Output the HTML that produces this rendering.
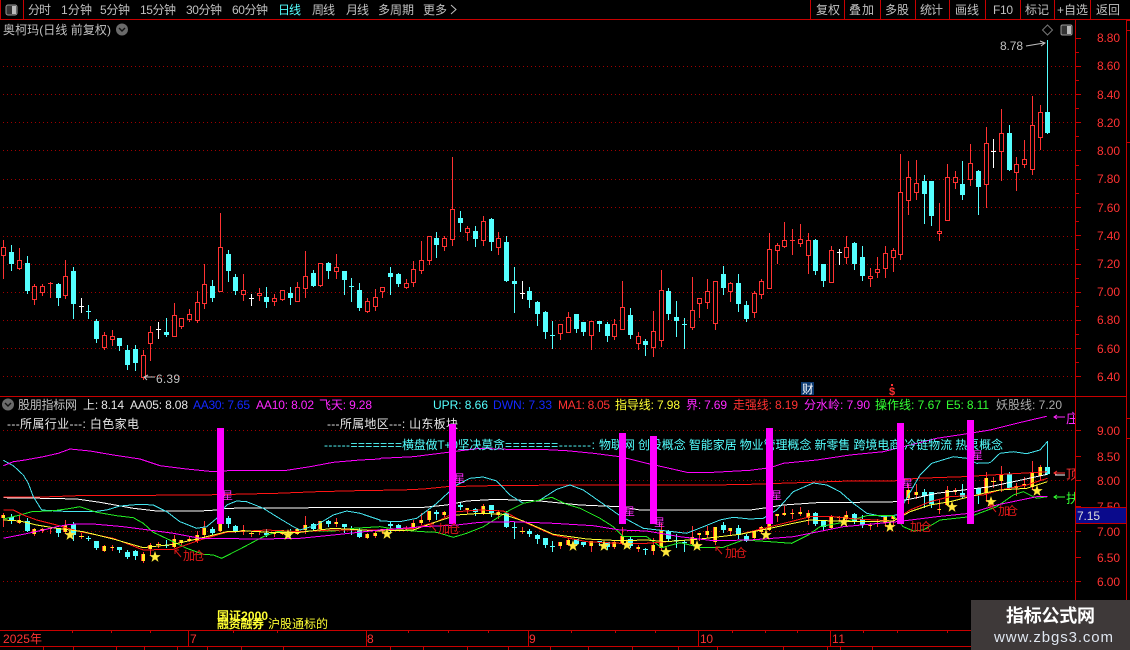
<!DOCTYPE html>
<html lang="zh"><head><meta charset="utf-8"><title>K线</title>
<style>
html,body{margin:0;padding:0;background:#000;width:1130px;height:650px;overflow:hidden}
svg{display:block;position:absolute;left:0;top:0}
text{font-family:"Liberation Sans","Noto Sans CJK SC",sans-serif;font-size:12px;white-space:pre}
.g{fill:#c0c0c0}.r{fill:#ff3232}.c{fill:#54ffff}.w{fill:#e6e6e6}.b{fill:#1428ff}.m{fill:#ff28ff}.y{fill:#ffff33}.n{fill:#33ff33}
</style></head><body>
<svg id="s" width="1130" height="650" viewBox="0 0 1130 650" xmlns="http://www.w3.org/2000/svg">
<defs><clipPath id="cl"><rect x="1040" y="398" width="35" height="200"/></clipPath></defs>
<g id="grid" shape-rendering="crispEdges"></g>
<g id="up" shape-rendering="crispEdges"></g>
<g id="lo" shape-rendering="crispEdges"></g>
<g id="ln" fill="none" stroke-linejoin="round" shape-rendering="crispEdges"></g>

<!-- toolbar -->
<g class="g">
<text x="28" y="14" textLength="23">分时</text><text x="61" y="14" textLength="31">1分钟</text><text x="100" y="14" textLength="30">5分钟</text><text x="140" y="14" textLength="36">15分钟</text><text x="186" y="14" textLength="36">30分钟</text><text x="232" y="14" textLength="36">60分钟</text>
<text x="278" y="14" textLength="23" class="c">日线</text><text x="312" y="14" textLength="23">周线</text><text x="346" y="14" textLength="23">月线</text><text x="378" y="14" textLength="36">多周期</text><text x="423" y="14" textLength="24">更多</text>
<text x="816" y="14" textLength="24">复权</text><text x="849" y="14" textLength="25">叠加</text><text x="885" y="14" textLength="24">多股</text><text x="920" y="14" textLength="23">统计</text><text x="955" y="14" textLength="24">画线</text><text x="993" y="14" textLength="20">F10</text><text x="1025" y="14" textLength="24">标记</text><text x="1057" y="14" textLength="31">+自选</text><text x="1096" y="14" textLength="24">返回</text>
<text x="3" y="34" textLength="108">奥柯玛(日线 前复权)</text>
</g>
<path d="M451 5l5 4.5-5 4.5" fill="none" stroke="#c0c0c0"/>
<rect x="6" y="5" width="11" height="10" rx="2" fill="#333" stroke="#999"/><rect x="12" y="6" width="4" height="8" fill="#bbb"/>
<circle cx="122" cy="29.5" r="6" fill="#6a6a6a"/><path d="M119 28l3 3 3-3" fill="none" stroke="#111" stroke-width="1.4"/>
<path d="M1047.5 25l5 5-5 5-5-5z" fill="none" stroke="#777"/>
<rect x="1061" y="25" width="11" height="10" rx="1.5" fill="#333" stroke="#999"/><rect x="1067" y="26" width="4" height="8" fill="#bbb"/>

<text x="1000" y="50" class="g" textLength="23">8.78</text>
<path d="M1026 46l18-3M1040 41l5 2-4 3" fill="none" stroke="#c0c0c0"/>
<text x="156" y="383" class="g" textLength="24">6.39</text>
<path d="M144 377h11M148 375l-4 2 3 3" fill="none" stroke="#c0c0c0"/>
<rect x="801" y="382" width="13" height="13" fill="#0d3a70"/><text x="802" y="393" style="font-size:11.5px" fill="#fff">财</text>
<text x="889" y="395" style="font-size:11px;font-weight:bold" class="r">$</text><rect x="891" y="384" width="2" height="2" fill="#ff3232"/>

<!-- legend -->
<circle cx="8" cy="404.5" r="6" fill="#6a6a6a"/><path d="M5 403l3 3 3-3" fill="none" stroke="#111" stroke-width="1.4"/>
<text x="18" y="409" class="g" textLength="59">股朋指标网</text>
<text x="83" y="409" class="w" textLength="41">上: 8.14</text><text x="130" y="409" class="w" textLength="58">AA05: 8.08</text>
<text x="193" y="409" class="b" textLength="57">AA30: 7.65</text><text x="256" y="409" class="m" textLength="58">AA10: 8.02</text><text x="319" y="409" class="m" textLength="53">飞天: 9.28</text>
<text x="433" y="409" class="c" textLength="55">UPR: 8.66</text><text x="493" y="409" class="b" textLength="59">DWN: 7.33</text><text x="558" y="409" class="r" textLength="52">MA1: 8.05</text>
<text x="615" y="409" class="y" textLength="65">指导线: 7.98</text><text x="686" y="409" class="m" textLength="41">界: 7.69</text><text x="733" y="409" class="r" textLength="65">走强线: 8.19</text>
<text x="804" y="409" class="m" textLength="66">分水岭: 7.90</text><text x="875" y="409" class="n" textLength="66">操作线: 7.67</text><text x="946" y="409" class="n" textLength="43">E5: 8.11</text><text x="996" y="409" fill="#aaa" textLength="66">妖股线: 7.20</text>

<text x="7" y="428" class="w" textLength="132">---所属行业---: 白色家电</text>
<text x="327" y="428" class="w" textLength="131">---所属地区---: 山东板块</text>
<g class="c">
<text x="324" y="449" textLength="78">------=======</text><text x="402" y="449" textLength="103">横盘做T+0坚决莫贪</text><text x="505" y="449" textLength="90">=======-------:</text>
<text x="599" y="449" textLength="404">物联网 创投概念 智能家居 物业管理概念 新零售 跨境电商 冷链物流 热泵概念</text>
</g>

<!-- bars & labels drawn by script into #ov -->
<g id="ov"></g>

<g fill="#e01818">
<text x="183" y="560" textLength="22">加仓</text><text x="438" y="533" textLength="22">加仓</text><text x="725" y="557" textLength="22">加仓</text><text x="998" y="515" textLength="20">加仓</text><text x="910" y="531" textLength="22">加仓</text>
</g>
<path d="M181 557l-6-7M175 554v-4h4M436 531l-6-7M430 528v-4h4M722 554l-6-7M716 551v-4h4M996 512l-6-7M990 509v-4h4" fill="none" stroke="#e01818"/>

<g class="y" style="font-weight:bold">
<text x="217" y="620" textLength="51">国证2000</text><text x="217" y="628" textLength="47">融资融券</text></g>
<text x="268" y="628" class="y" textLength="60">沪股通标的</text>

<!-- right arrows clipped by axis -->
<g clip-path="url(#cl)">
<path d="M1054 417h11M1057 415l-3 2 3 2" stroke="#ff28ff" fill="none"/><text x="1066" y="423" class="m" style="font-size:13px">庄</text>
<path d="M1054 473h11M1057 471l-3 2 3 2" stroke="#ff3232" fill="none"/><path d="M1055 475h10" stroke="#fff"/><text x="1066" y="479" class="r" style="font-size:13px">顶</text>
<path d="M1054 497h11M1057 495l-3 2 3 2" stroke="#33ff33" fill="none"/><text x="1066" y="503" class="n" style="font-size:13px">扶</text>
</g>

<!-- axis labels -->
<g class="r">
<text x="1097" y="42" textLength="23">8.80</text><text x="1097" y="70" textLength="23">8.60</text><text x="1097" y="99" textLength="23">8.40</text><text x="1097" y="127" textLength="23">8.20</text><text x="1097" y="155" textLength="23">8.00</text><text x="1097" y="183" textLength="23">7.80</text><text x="1097" y="212" textLength="23">7.60</text><text x="1097" y="240" textLength="23">7.40</text><text x="1097" y="268" textLength="23">7.20</text><text x="1097" y="296" textLength="23">7.00</text><text x="1097" y="324" textLength="23">6.80</text><text x="1097" y="353" textLength="23">6.60</text><text x="1097" y="381" textLength="23">6.40</text>
<text x="1097" y="435" textLength="23">9.00</text><text x="1097" y="461" textLength="23">8.50</text><text x="1097" y="485" textLength="23">8.00</text><text x="1097" y="511" textLength="23">7.50</text><text x="1097" y="536" textLength="23">7.00</text><text x="1097" y="562" textLength="23">6.50</text><text x="1097" y="586" textLength="23">6.00</text>
<text x="3" y="643" textLength="39">2025年</text><text x="190" y="643">7</text><text x="367" y="643">8</text><text x="529" y="643">9</text><text x="700" y="643" textLength="13">10</text><text x="832" y="643" textLength="13">11</text>
</g>
<rect x="1076" y="507" width="50" height="17" fill="#0a0a8c" shape-rendering="crispEdges"/>
<path d="M1076 507.5h50M1076 523.5h50" stroke="#c00000" shape-rendering="crispEdges"/>
<text x="1077" y="520" fill="#dcdcdc" textLength="23">7.15</text>

<!-- watermark -->
<rect x="971" y="600" width="159" height="50" fill="#3e3939"/>
<text x="1006" y="622" fill="#fff" style="font-size:18px;font-weight:bold" textLength="89">指标公式网</text>
<text x="994" y="642" fill="#dfe6f0" style="font-size:15px" textLength="119">www.zbgs3.com</text>
</svg>
<script>
var D=[
[0,230,"r10,30,52,74,143;c34,45,66,101,120;r58,55,91,113,117;c82,78,99,183,188;r103,162,169,206,221;r127,162,169,185,194;r151,155,159,163,201;c175,158,162,204,224;r196,90,139,194,203;c220,111,123,221,263;w243,204,227,228,246;c265,225,244,245,263;c289,267,273,327,336;r313,306,316,350,357;r337,300,319,326,345;c358,324,324,347,359;c382,346,360,404,416;c406,345,357,399,419;r430,360,376,440,446;r451,288,307,338,389;w474,277,296,297,323;c499,264,306,315,318;r523,219,256,317,317;r544,265,265,287,293;r568,237,253,266,272;r592,184,217,269,275;r613,102,163,218,234;c637,150,168,204,212;r661,-51,52,182,183;c685,60,72,123,153;c706,132,141,183,191;r730,132,181,191,209;w753,192,205,206,224;r778,174,190,194,209;c799,171,201,216,231;r823,193,203,212,224;r847,181,181,207,209;c871,171,190,204,221;r892,156,172,212,212;r916,64,139,173,201;c940,120,129,167,167;r961,100,100,164,167;c985,97,100,123,144;r1009,72,112,124,144;c1033,123,123,150,192;c1054,144,169,170,213;c1078,159,180,234,240;r1102,205,214,243,245;r1126,177,202,228,240"],
[380,170,"r7,352,352,364,381;c31,291,309,321,372;c55,309,312,342,348;r79,327,340,350,354;r100,273,298,335,348;r124,213,271,299,309;r148,199,199,269,282;c169,186,204,225,261;r193,199,205,227,240;r217,-39,118,206,225;c241,123,144,159,183;r262,168,175,185,210;c286,168,183,207,228;r310,138,154,209,225;c334,145,147,216,240;r355,186,205,230,252;c379,198,216,333,333;c403,291,333,342,426;w427,333,369,371,384;c448,351,363,390,411;c472,393,396,432,465;c496,423,426,486,504;c517,453,495,497,534;r541,463,463,488,507;r565,426,442,485,485;c589,432,432,477,486;c610,456,456,486,495;r634,453,454,494,537;c658,453,453,462,483;c682,456,462,498,513;r703,447,463,497,507;r727,333,412,476,476;c751,414,435,495,504;r775,486,499,518,537;c796,507,513,525,555;r820,423,484,530,558;r844,300,361,509,528;c865,354,363,432,447;c889,393,441,453,498;c913,444,462,464,534;r937,321,421,470,477;r958,385,385,398,441;r982,327,364,395,414;r1006,334,334,458,477;c1030,288,312,354,372;r1051,336,340,362,393;c1075,312,339,402,423;c1099,393,405,447,453"],
[750,90,"r13,603,609,665,681;r34,567,574,611,624;r58,429,478,593,593;r82,459,466,479,520;r103,396,451,467,470;r127,417,449,452,491;r151,402,448,458,467;r175,429,451,494,549;c196,447,450,543,552;c220,522,522,573,588;r244,468,481,575,575;w267,477,486,488,522;r289,438,472,500,519;c313,456,459,522,537;c337,468,501,558,570;r361,534,558,563,588;r382,501,538,545,561;r406,468,490,533,561;r430,474,481,500,543;r451,192,307,491,507;r475,213,262,329,372;r499,210,280,305,327;c523,255,273,312,399;c544,273,273,378,405;r568,339,424,428,450;r592,222,262,389,389;r616,243,262,275,294;c637,213,282,315,327;r661,162,220,266,285;c685,240,243,291,372;r709,111,160,281,351;w730,147,184,186,231;r754,57,130,182,270;c778,105,129,240,240;r799,201,223,245,300;r823,150,208,221,231;r847,18,106,236,252;r871,45,67,140,177;c892,-150,66,129,129"]];
var R="#ff3232",C="#54ffff",Y="#ffe61e",up="",lo="";
function rc(x,y,w,h,f,extra){return '<rect x="'+x+'" y="'+y+'" width="'+w+'" height="'+Math.max(h,1)+'" fill="'+f+'"'+(extra||'')+'/>'}
function ly(y){return Math.round(440.3+(y-37)*.356)}
D.forEach(function(s){s[2].split(";").forEach(function(k){
 var t=k[0],a=k.slice(1).split(",").map(Number),x=Math.round(s[0]+a[0]/3-.5),
 h=Math.round(s[1]+a[1]/3),o=Math.round(s[1]+a[2]/3),b=Math.round(s[1]+a[3]/3),l=Math.round(s[1]+a[4]/3);
 var col=t=="r"?R:t=="c"?C:"#fff";
 up+=rc(x,h,1,l-h+1,col);
 if(t=="r"&&b-o>1){up+=rc(x-2,o,5,b-o+1,R)+rc(x-1,o+1,3,b-o-1,"#000");}
 else up+=rc(x-2,o,5,Math.max(b-o,t=="w"||b-o<2?1:b-o),col);
 var H=ly(h),O=ly(o),B=ly(b),L=ly(l);
 if(t=="c"){lo+=rc(x,H,1,L-H+1,C)+rc(x-2,O,5,Math.max(B-O,1),C);}
 else if(t=="w"){lo+=rc(x,H,1,L-H+1,R)+rc(x-2,O,5,1,Y);}
 else{lo+=rc(x,H,1,L-H+1,R)+rc(x-2,O,4,Math.max(B-O,1),R)+rc(x-1,O,3,Math.max(B-O,1),Y);}
})});
document.getElementById("up").innerHTML=up;document.getElementById("lo").innerHTML=lo;

var g="",dot=' stroke="#a00000" stroke-dasharray="1 3"';
[66,94,122,150,179,207,236,264,292,320,348,376,430,480,531,581].forEach(function(y){g+='<path d="M3 '+(y+.5)+'H1075"'+dot+'/>'});
var RL="#c80000";
function hl(y,a,b){g+=rc(a,y,b-a,1,RL)}function vl(x,a,b){g+=rc(x,a,1,b-a,RL)}
hl(19,0,1130);hl(396,0,1126);hl(630,0,971);hl(646,0,971);
vl(0,0,19);vl(23,0,19);vl(1075,19,600);vl(1126,19,600);
[810,844,880,915,949,985,1020,1054,1090].forEach(function(x){vl(x,0,19)});
[188,366,528,698,830].forEach(function(x){vl(x,630,646)});
[72,111,150,233,277,408,448,488,571,615,655,732,765,797,863,897,947].forEach(function(x){vl(x,630,633)});
[43,73,116,144,177,207,241,283,390,423,467,508,550,588,632,678,717,783,827,840,872].forEach(function(x){vl(x,646,650)});
var u=[37.5,65.7,94,122.3,150.4,178.7,207,235.3,263.5,291.7,320,348.2,376.4];
u.forEach(function(y,i){hl(Math.round(y),1076,1081);if(i<12)hl(Math.round(y+14.1),1076,1079)});
[430,456,480,506,531,557,581].forEach(function(y){hl(y,1076,1081)});
[[418],[438],[142],[30],[20]].forEach(function(y){hl(y[0],1126,1130)});
document.getElementById("grid").innerHTML=g;

function pts(a){var o=[];[[0,a[0]],[380,a[1]],[750,a[2]]].forEach(function(p){
 if(!p[1])return;var n=p[1].trim().split(/\s+/);for(var i=0;i<n.length;i++){var v=n[i].split(",");o.push((p[0]+v[0]/3).toFixed(1)+","+(395+v[1]/3).toFixed(1));}});return o.join(" ")}
var L=[
["#ffffff",1,"10,308 130,310 230,312 300,322 400,340 470,348 600,348 650,345 680,340 950,338 1140,338","120,338 200,330 260,318 350,313 480,318 600,330 720,335 780,345 1110,345","50,338 100,330 200,323 320,322 440,320 500,308 560,295 640,285 720,275 800,258 892,238"],
["#ff1414",1,"10,306 130,306 230,302 600,300 700,298 830,295 950,290 1070,287 1140,286","65,285 130,282 200,275 330,272 560,270 1000,270 1110,268","300,258 430,258 500,250 640,245 760,238 892,230"],
["#46e6f0",1,"10,196 40,212 70,240 85,265 100,305 125,345 170,348 220,350 280,350 320,345 360,333 420,328 460,330 500,350 540,380 590,400 620,395 650,370 680,330 710,318 740,320 790,340 830,365 880,395 900,405 950,390 1000,360 1040,348 1080,355 1140,375","0,378 60,380 110,370 170,325 230,270 270,250 310,246 350,258 390,300 430,325 480,315 530,283 570,270 610,285 660,320 720,362 790,400 860,408 920,415 970,395 1020,375 1060,367 1110,372","40,370 80,345 130,290 190,264 230,270 270,290 310,325 350,355 400,365 440,360 470,310 510,240 545,205 610,185 650,190 680,205 720,203 750,175 790,170 830,176 870,165 892,140 892,240"],
["#ff00ff",1,"10,212 40,200 75,195 130,185 175,175 210,162 270,168 340,180 420,192 480,212 560,222 640,230 700,226 780,227 860,226 930,215 1000,202 1080,195 1140,192","0,190 100,185 180,175 300,160 380,163 480,163 560,167 640,175 720,185 800,205 860,218 920,232 1000,232 1110,226","60,218 100,205 200,195 300,180 400,170 460,155 560,130 640,118 720,105 800,85 890,64"],
["#22ee22",1,"10,372 60,360 95,350 160,347 200,342 240,335 290,352 350,362 400,368 430,385 460,412 520,440 560,460 610,478 640,480 665,490 720,462 790,425 830,410 880,410 940,408 1000,408 1060,400 1140,395","60,405 130,410 170,412 220,427 260,415 310,395 350,370 390,345 430,325 480,315 515,307 560,328 600,340 660,370 700,395 730,425 800,425 845,458 900,443 960,457 1030,457 1090,435","60,440 125,445 175,420 210,395 280,382 350,362 430,362 460,395 490,408 520,405 570,375 660,365 740,335 790,300 820,290 860,310 892,305"],
["#ff1414",1,"10,345 40,345 70,360 110,375 170,390 240,410 340,430 430,465 520,463 600,435 680,412 800,405 900,410 1000,405 1140,405","100,400 170,380 230,350 300,345 370,348 430,380 520,420 620,440 720,445 800,445 860,440 960,432 1080,418","60,395 130,378 180,365 250,365 320,372 430,378 480,345 540,320 600,305 700,300 750,285 830,270 892,250"],
["#ffff33",1,"10,375 60,378 110,390 170,400 250,410 340,432 430,458 520,448 600,430 680,410 740,408 810,412 900,412 1000,400 1140,408","100,405 170,380 230,360 300,355 370,358 430,378 520,418 620,432 720,437 800,435 860,440 960,432 1080,418","60,400 130,385 180,375 250,378 320,380 430,378 480,350 540,330 600,320 700,295 750,285 830,280 892,260"],
["#ff00ff",1,"10,430 60,420 130,405 170,395 210,388 280,387 370,395 430,403 520,415 600,430 780,432 900,430 1000,420 1140,405","130,395 230,390 300,382 400,380 520,385 640,392 720,405 800,408 900,425 1000,437 1110,435","130,425 280,395 440,380 560,365 660,355 740,330 860,305 892,305"]];
var ln="";L.forEach(function(l){ln+='<polyline points="'+pts(l.slice(2))+'" stroke="'+l[0]+'" stroke-width="'+l[1]+'"/>'});
document.getElementById("ln").innerHTML=ln;

var ov="";
[[217,428],[449,424],[619,433],[650,436],[766,428],[897,423],[967,420]].forEach(function(b){ov+=rc(b[0],b[1],7,524-b[1],"#ff00ff",' shape-rendering="crispEdges"')});
[[227,499],[459,482],[629,515],[659,526],[776,499],[907,487],[977,459]].forEach(function(p){ov+='<text x="'+(p[0]-5)+'" y="'+p[1]+'" fill="#ff28ff" style="font-size:11px">星</text>'});
function star(cx,cy){var r=6,q=2.4,s="";for(var i=0;i<10;i++){var a=-Math.PI/2+i*Math.PI/5,d=i%2?q:r;s+=(cx+d*Math.cos(a)).toFixed(1)+","+(cy+d*Math.sin(a)).toFixed(1)+" "}return '<polygon points="'+s+'" fill="#ffe83c"/>'}
[[70,535],[155,557],[288,535],[387,534],[573,546],[604,546],[627,545],[666,552],[697,546],[766,535],[844,522],[890,527],[952,507],[991,502],[1037,491]].forEach(function(p){ov+=star(p[0],p[1])});
document.getElementById("ov").innerHTML=ov;
</script>
</body></html>
